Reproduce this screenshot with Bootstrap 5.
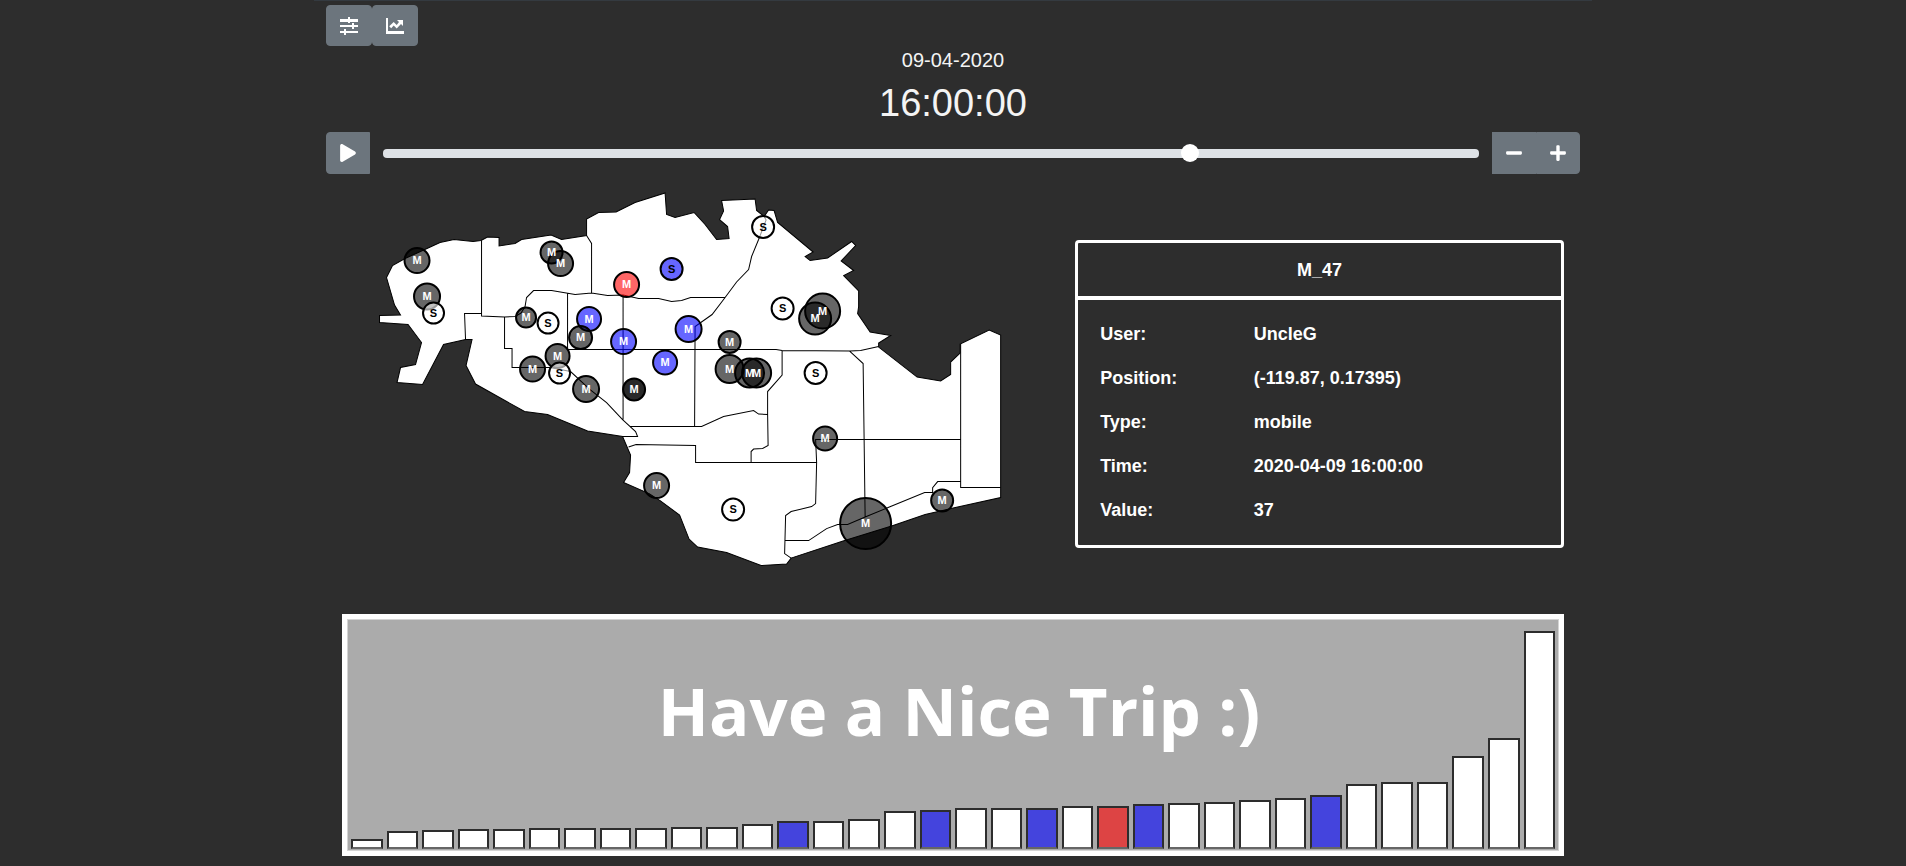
<!DOCTYPE html>
<html lang="en">
<head>
<meta charset="utf-8">
<meta name="viewport" content="width=device-width, initial-scale=1">
<title>Radiation sensors</title>
<link href="https://cdn.jsdelivr.net/npm/bootstrap@5.3.0/dist/css/bootstrap.min.css" rel="stylesheet">
<style>
  body { background: #2d2d2d; color: #f4f4f4; font-family: "Liberation Sans", Arial, sans-serif; }
  .dashboard { max-width: 1278px; border-top: 1px solid #343a40; padding: 4px 12px 10px; }
  .tool-btn { --bs-btn-bg: #6c757d; --bs-btn-border-color: #6c757d; --bs-btn-border-radius: 4px; height: 42px; width: 44px; padding: 0; color: #fff; }
  .top-tools .tool-btn { height: 41px; width: 46px; }
  .tool-btn svg { display: block; margin: auto; fill: currentColor; }
  .date-text { font-size: 20px; line-height: 24px; margin: 2px 0 7px; }
  .time-text { font-size: 38px; line-height: 48px; margin: 0 0 5px; font-weight: 400; }
  .timeline { gap: 13px; margin-bottom: 10px; }
  .time-range { height: 42px; }
  .time-range::-webkit-slider-runnable-track { height: 9px; background: #dee2e6; border-radius: 4px; }
  .time-range::-webkit-slider-thumb { width: 18px; height: 18px; margin-top: -5px; background: #fff; }
  .overview { display: grid; grid-template-columns: 3fr 2fr; align-items: center; margin-bottom: 10px; }
  .sensor-map { display: block; width: 100%; height: auto; }
  .sensor-map text { font-size: 11px; font-weight: 700; text-anchor: middle; }
  .info-card { border: 3px solid #fff; border-radius: 4px; font-size: 18px; font-weight: 700; color: #fff; }
  .info-head { height: 57px; line-height: 54px; border-bottom: 4px solid #fff; font-size: 18px; font-weight: 700; margin: 0; }
  .info-body { padding: 12px 22px 13px; }
  .info-body table { width: 100%; }
  .info-body th, .info-body td { height: 44px; padding: 0; vertical-align: middle; }
  .info-body th { width: 35%; }
  .trip-chart { height: 242px; border: 5px solid #fff; }
  .plot-area { border: 1px solid #d4d4d4; background: #ababab; padding: 0 3px 1px; gap: 4px; }
  .value-bar { flex: 1 1 0; background: #fff; border: 2px solid #2d2d2d; border-bottom: 2px solid #666; }
  .value-bar.blue { background: #4444dd; }
  .value-bar.red { background: #dd4444; }
  .trip-title { top: 49px; padding-left: 12px; font: 700 67px/84px "Open Sans", "Noto Sans", sans-serif; color: #fff; }
</style>
</head>
<body>
<main class="dashboard container-fluid">
  <div class="top-tools d-flex">
    <button type="button" class="btn tool-btn" aria-label="Settings">
      <svg width="18" height="18" viewBox="0 0 18 18"><path d="M0 2h8V0h2v2h8v3h-8v1H8V5H0zM0 8h12V6h2v2h4v2h-4v2h-2v-2H0zM0 14h4v-2h2v2h12v2H6v2H4v-2H0z"/></svg>
    </button>
    <button type="button" class="btn tool-btn" aria-label="Statistics">
      <svg width="18" height="18" viewBox="0 0 18 18"><path d="M0 1h2v13h16v3H0z"/><path d="M11 3h6v6l-2-2-4.300 4.500-3-3L5.200 11.200 3.200 9.300 7.700 4.900l3 3L13 5z"/></svg>
    </button>
  </div>
  <header class="text-center">
    <p class="date-text">09-04-2020</p>
    <h1 class="time-text">16:00:00</h1>
  </header>
  <div class="timeline d-flex align-items-center">
    <button type="button" class="btn tool-btn rounded-end-0 flex-shrink-0" aria-label="Play">
      <svg width="16" height="18" viewBox="0 0 448 512"><path d="M424.400 214.700L72.400 6.600C43.800-10.300 0 6.100 0 47.900V464c0 37.500 40.700 60.100 72.400 41.300l352-208c31.400-18.500 31.500-64.100 0-82.600z"/></svg>
    </button>
    <input type="range" class="form-range time-range" min="0" max="1000" value="740" aria-label="Time">
    <div class="d-flex flex-shrink-0">
      <button type="button" class="btn tool-btn rounded-0" aria-label="Slower">
        <svg width="16" height="18" viewBox="0 0 448 512"><path d="M416 208H32c-17.670 0-32 14.330-32 32v32c0 17.670 14.330 32 32 32h384c17.670 0 32-14.330 32-32v-32c0-17.670-14.330-32-32-32z"/></svg>
      </button>
      <button type="button" class="btn tool-btn rounded-start-0" aria-label="Faster">
        <svg width="16" height="18" viewBox="0 0 448 512"><path d="M416 208H272V64c0-17.670-14.330-32-32-32h-32c-17.670 0-32 14.330-32 32v144H32c-17.670 0-32 14.330-32 32v32c0 17.670 14.330 32 32 32h144v144c0 17.670 14.330 32 32 32h32c17.670 0 32-14.330 32-32V304h144c17.670 0 32-14.330 32-32v-32c0-17.670-14.330-32-32-32z"/></svg>
      </button>
    </div>
  </div>

  <section class="overview px-3">
    <svg class="sensor-map" viewBox="342 184 733 420" role="img" aria-label="Sensor map">
      <!-- coast line -->
      <path fill="#fff" stroke="#000" d="M481 240.500L473 241.500 454 239.500 440 242.500 427 248.500 405 258.500 392.500 265.500 386.500 277.500 394.500 305 400.500 315 379.500 315.500V322.500L408 324.500 421.500 342.500 415.500 364.500 400.500 367.500 397 382.500 422.500 384.500 443.500 344.500 465.500 339.500H472L466 365.500 475.500 384 524.500 411.500 547.500 414.500 587.500 431 622.500 436.500 630.500 455 629.500 472.500 623.500 482.500 649 493.500 660 500.500 679.500 515 689 539 697.500 547 726.500 552.500 761 565.500 786.500 564 791 558 843 541 891.500 526 925 514.500 953 508 1000.500 497.500V335L989 330 960 344V353L950.500 362V374.500L940.500 381 917 377 878.500 347V343L890.500 335.500 870 332 857.500 313.500 858.500 306.500V291L843.500 275.500 853.500 270.500 841 261 855.500 245.500 851.500 241.500 827.500 258 810 260.500 805 256.500 813 252 777.500 222.500 774 210.500 768.500 210 764 216.500 756.500 210.500 755 199 721.500 200.500 723.500 211 719.500 219.500 727.500 226.500 729 238.500 716.500 239.500 705 224.500 694 212.500 675 217.500 666.500 214.500 665 193 635 202.500 616 212 598.500 212.500 586.500 219V235.500L561.500 239.500 551 235 521.500 239.500 515 243.500 499 246V237.500L487.500 237z"/>
      <!-- district borders -->
      <path fill="none" stroke="#000" d="M481.500 240.500V316L504.500 317 515 316.500 521 313 525 306.500 526.500 297.500 533.500 290.500H551.500L575 294.500 591.500 293 607.500 295.500 623 295 638.500 298.500H658.500L671.500 301.500 681.500 300.500 690.500 297.500H725
        M481 313.500H464.500L465.500 339.500
        M504.500 317V348.500H512V367.500H550L570.500 371.500 590 389.500 606.500 402.500 622.500 419.500 635.500 431.500 637.500 436.500H622.500
        M586.500 235.500L591.500 243.500V293
        M567.500 293.500V349.500H776L782 350.500 850 351 860.500 350.500 878.500 346.500
        M623 295V419.500
        M764 216.500L766 220 758.500 239.500 751.500 256.500 748.500 269.500 736.500 282 725 297.500 712 314.500 695 326.500 694.500 426.500
        M630.500 426.500H701.500L723.500 416.500 753.500 410.500 758.500 414 767.500 414.500
        M782 350.500V375L767.500 391.500V414L768 445.500 762.500 448.500 753.500 449 751 451.500V462.500
        M628.500 447L636 444.500 695.500 445.500V462.500H817
        M960.500 439.500H815.500L816.500 462.500 815.500 503.500 811.500 506.500 791 511.500 785.500 515.500 784.500 553.500 791 558
        M849.500 351L863 363.500 865 516.500
        M785 540.500H808.500L826.500 528.500 837.500 524.500H847.500L865 517 888 507.500 924.500 492.500H932.500V487.500L937.500 481.500H960.500
        M960.500 344V487.500H1000.500"/>
      <g id="sensors" stroke="#000" stroke-width="2"></g>
    </svg>
    <div class="info-card">
      <h2 class="info-head text-center">M_47</h2>
      <div class="info-body">
        <table>
          <tbody>
            <tr><th scope="row">User:</th><td>UncleG</td></tr>
            <tr><th scope="row">Position:</th><td>(-119.87, 0.17395)</td></tr>
            <tr><th scope="row">Type:</th><td>mobile</td></tr>
            <tr><th scope="row">Time:</th><td>2020-04-09 16:00:00</td></tr>
            <tr><th scope="row">Value:</th><td>37</td></tr>
          </tbody>
        </table>
      </div>
    </div>
  </section>

  <section class="px-3">
    <div class="trip-chart position-relative">
      <div id="bars" class="plot-area d-flex align-items-end h-100"></div>
      <div class="trip-title position-absolute start-0 end-0 text-center">Have a Nice Trip :)</div>
    </div>
  </section>
</main>
<script src="https://cdn.jsdelivr.net/npm/bootstrap@5.3.0/dist/js/bootstrap.bundle.min.js"></script>
<script>
  // label, x, y, radius, fill, fill opacity
  const sensors = [
    ['M',417,260.5,12.5],['M',427,296.5,13],['S',433.5,313,10.5],['M',551.5,252.5,11],['M',560.5,263.5,12.5],
    ['M',626.5,284.5,12.5,'#f00'],['S',671.5,269,11,'#00f'],['M',526,317.5,10],['S',548,323,10.5],
    ['M',589,319,12,'#00f'],['M',580.5,337.5,11.5],['M',623.5,341.5,12.5,'#00f'],['M',688.5,329,13,'#00f'],
    ['M',665,362.5,12,'#00f'],['M',557.5,356,12],['M',532.5,369,12.5],['S',559.5,373,10.5],
    ['M',586,389,13],['M',634,389.5,11,'#000',0.84],['S',763,227,11],['S',782.5,308.5,11],
    ['M',822.5,311,17.5],['M',815,318.5,16],['M',729.5,342,11],['M',729.5,369,14],['M',749.5,373,14.5],
    ['M',756.5,373,14.5],['S',815.5,373,11],['M',825,438.5,12],['M',656.5,485.5,12.5],
    ['S',733,509.5,11],['M',865.5,523.5,25.5],['M',942,500.5,11]
  ];
  document.getElementById('sensors').innerHTML = sensors.map(([t, x, y, r, c, o]) => {
    const fill = c || (t === 'S' ? '#fff' : '#000');
    return `<circle cx="${x}" cy="${y}" r="${r}" fill="${fill}" fill-opacity="${o || 0.6}"/>`;
  }).join('') + sensors.map(([t, x, y]) =>
    `<text x="${x}" y="${y + 3.5}" stroke="none" fill="${t === 'S' ? '#000' : '#fff'}">${t}</text>`).join('');

  // bar heights as a share of the plot's 229 pixels
  const values = [10,18,19,20,20,21,21,21,21,22,22,25,28,28,30,38,39,41,41,41,43,43,45,46,47,49,51,54,65,67,67,93,111,218];
  const tone = {12:'blue', 16:'blue', 19:'blue', 21:'red', 22:'blue', 27:'blue'};
  document.getElementById('bars').innerHTML = values.map((v, i) =>
    `<div class="value-bar ${tone[i] || ''}" style="height:${(v / 229 * 100).toFixed(2)}%"></div>`).join('');
</script>
</body>
</html>
